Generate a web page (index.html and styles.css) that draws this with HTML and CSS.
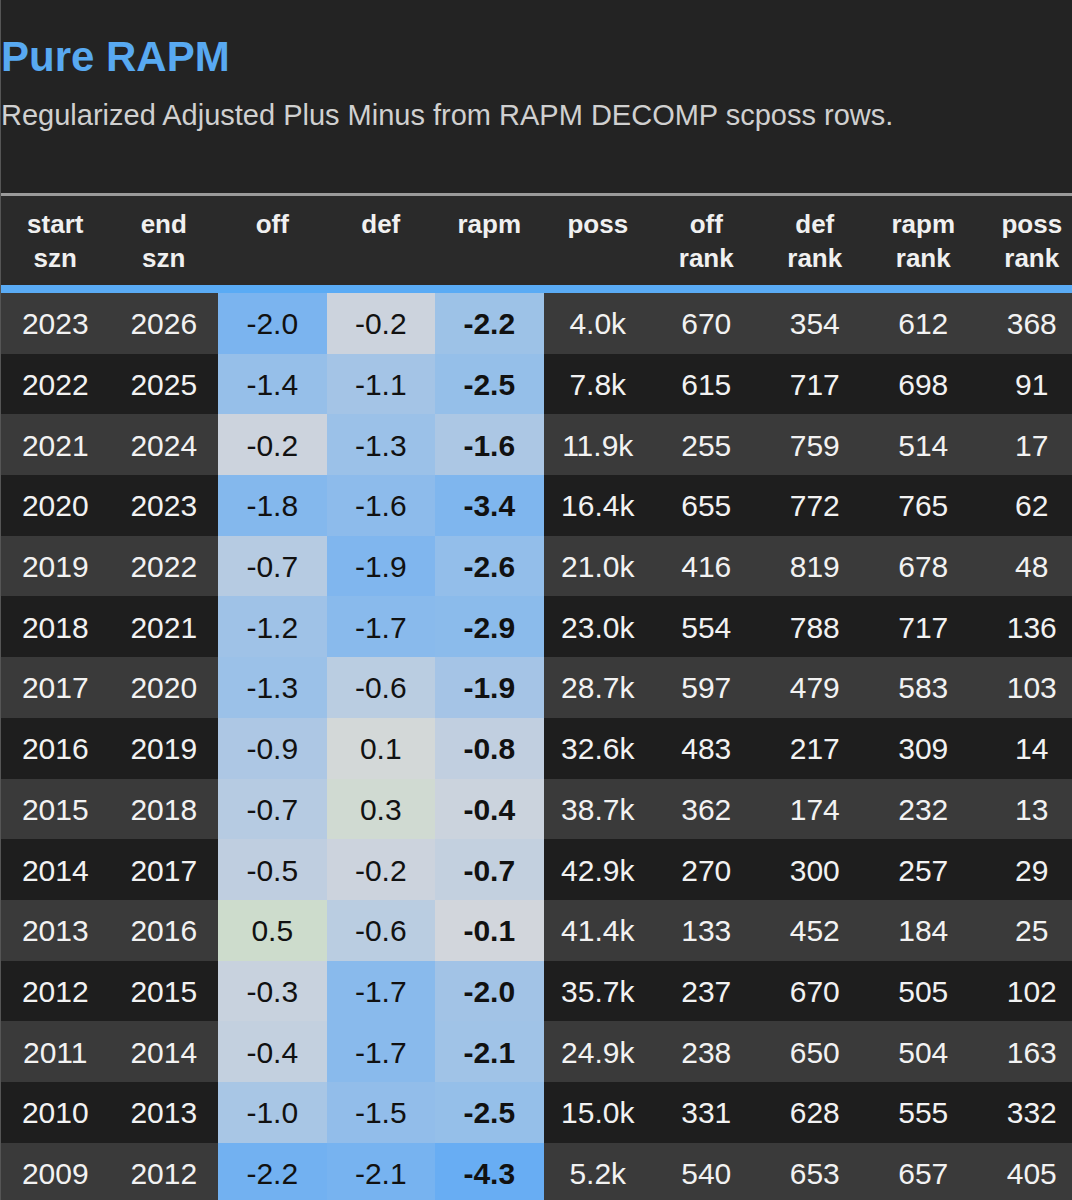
FILE: index.html
```html
<!DOCTYPE html>
<html lang="en">
<head>
<meta charset="utf-8">
<title>Pure RAPM</title>
<link rel="stylesheet" href="styles.css">
</head>
<body>
<div class="page">
  <h1 class="title">Pure RAPM</h1>
  <p class="subtitle">Regularized Adjusted Plus Minus from RAPM DECOMP scposs rows.</p>
  <table class="rapm">
    <colgroup>
      <col><col><col><col><col><col><col><col><col><col>
    </colgroup>
    <thead>
      <tr>
        <th>start<br>szn</th>
        <th>end<br>szn</th>
        <th>off</th>
        <th>def</th>
        <th>rapm</th>
        <th>poss</th>
        <th>off<br>rank</th>
        <th>def<br>rank</th>
        <th>rapm<br>rank</th>
        <th>poss<br>rank</th>
      </tr>
    </thead>
    <tbody>
      <tr><td>2023</td><td>2026</td><td class="heat" style="background:#7bb4ef">-2.0</td><td class="heat" style="background:#ccd3dd">-0.2</td><td class="heat total" style="background:#9dc2e7">-2.2</td><td>4.0k</td><td>670</td><td>354</td><td>612</td><td>368</td></tr>
      <tr><td>2022</td><td>2025</td><td class="heat" style="background:#96bfe9">-1.4</td><td class="heat" style="background:#a4c4e6">-1.1</td><td class="heat total" style="background:#95bfe9">-2.5</td><td>7.8k</td><td>615</td><td>717</td><td>698</td><td>91</td></tr>
      <tr><td>2021</td><td>2024</td><td class="heat" style="background:#ccd3dd">-0.2</td><td class="heat" style="background:#9bc1e8">-1.3</td><td class="heat total" style="background:#acc7e4">-1.6</td><td>11.9k</td><td>255</td><td>759</td><td>514</td><td>17</td></tr>
      <tr><td>2020</td><td>2023</td><td class="heat" style="background:#84b8ed">-1.8</td><td class="heat" style="background:#8dbbeb">-1.6</td><td class="heat total" style="background:#7fb6ee">-3.4</td><td>16.4k</td><td>655</td><td>772</td><td>765</td><td>62</td></tr>
      <tr><td>2019</td><td>2022</td><td class="heat" style="background:#b6cbe2">-0.7</td><td class="heat" style="background:#80b6ee">-1.9</td><td class="heat total" style="background:#93beea">-2.6</td><td>21.0k</td><td>416</td><td>819</td><td>678</td><td>48</td></tr>
      <tr><td>2018</td><td>2021</td><td class="heat" style="background:#9fc2e7">-1.2</td><td class="heat" style="background:#89baec">-1.7</td><td class="heat total" style="background:#8bbbeb">-2.9</td><td>23.0k</td><td>554</td><td>788</td><td>717</td><td>136</td></tr>
      <tr><td>2017</td><td>2020</td><td class="heat" style="background:#9bc1e8">-1.3</td><td class="heat" style="background:#bacde1">-0.6</td><td class="heat total" style="background:#a5c4e6">-1.9</td><td>28.7k</td><td>597</td><td>479</td><td>583</td><td>103</td></tr>
      <tr><td>2016</td><td>2019</td><td class="heat" style="background:#adc7e4">-0.9</td><td class="heat" style="background:#d3d8d8">0.1</td><td class="heat total" style="background:#c1cfe0">-0.8</td><td>32.6k</td><td>483</td><td>217</td><td>309</td><td>14</td></tr>
      <tr><td>2015</td><td>2018</td><td class="heat" style="background:#b6cbe2">-0.7</td><td class="heat" style="background:#d0dad2">0.3</td><td class="heat total" style="background:#cbd3dd">-0.4</td><td>38.7k</td><td>362</td><td>174</td><td>232</td><td>13</td></tr>
      <tr><td>2014</td><td>2017</td><td class="heat" style="background:#bfcee0">-0.5</td><td class="heat" style="background:#ccd3dd">-0.2</td><td class="heat total" style="background:#c3d0df">-0.7</td><td>42.9k</td><td>270</td><td>300</td><td>257</td><td>29</td></tr>
      <tr><td>2013</td><td>2016</td><td class="heat" style="background:#cddccc">0.5</td><td class="heat" style="background:#bacde1">-0.6</td><td class="heat total" style="background:#d2d6dc">-0.1</td><td>41.4k</td><td>133</td><td>452</td><td>184</td><td>25</td></tr>
      <tr><td>2012</td><td>2015</td><td class="heat" style="background:#c8d2de">-0.3</td><td class="heat" style="background:#89baec">-1.7</td><td class="heat total" style="background:#a2c3e6">-2.0</td><td>35.7k</td><td>237</td><td>670</td><td>505</td><td>102</td></tr>
      <tr><td>2011</td><td>2014</td><td class="heat" style="background:#c3d0df">-0.4</td><td class="heat" style="background:#89baec">-1.7</td><td class="heat total" style="background:#a0c3e7">-2.1</td><td>24.9k</td><td>238</td><td>650</td><td>504</td><td>163</td></tr>
      <tr><td>2010</td><td>2013</td><td class="heat" style="background:#a8c6e5">-1.0</td><td class="heat" style="background:#92bdea">-1.5</td><td class="heat total" style="background:#95bfe9">-2.5</td><td>15.0k</td><td>331</td><td>628</td><td>555</td><td>332</td></tr>
      <tr><td>2009</td><td>2012</td><td class="heat" style="background:#72b1f1">-2.2</td><td class="heat" style="background:#77b3f0">-2.1</td><td class="heat total" style="background:#68adf3">-4.3</td><td>5.2k</td><td>540</td><td>653</td><td>657</td><td>405</td></tr>
    </tbody>
  </table>
</div>
</body>
</html>
```

FILE: styles.css
```css
html, body {
  margin: 0;
  padding: 0;
  background: #232323;
  overflow: hidden;
}

body {
  font-family: "Liberation Sans", Arial, Helvetica, sans-serif;
  color: #f0f0f0;
}

.page {
  width: 1071px;
  min-height: 1200px;
  border-left: 1px solid #555555;
  overflow: hidden;
}

.title {
  margin: 33px 0 0 0;
  font-size: 42px;
  line-height: 48px;
  font-weight: bold;
  color: #58a9f1;
}

.subtitle {
  margin: 17px 0 0 0;
  font-size: 29px;
  line-height: 34px;
  color: #d0d0d0;
}

.rapm {
  margin-top: 61px;
  width: 1085px;
  table-layout: fixed;
  border-collapse: separate;
  border-spacing: 0;
  border-top: 3px solid #9a9a9a;
}

.rapm col {
  width: 108.5px;
}

.rapm thead th {
  background: #2a2a2a;
  height: 97px;
  padding: 11px 0 0 0;
  box-sizing: border-box;
  vertical-align: top;
  font-size: 26px;
  line-height: 34px;
  font-weight: bold;
  color: #f0f0f0;
  text-align: center;
  border-bottom: 8px solid #5aabf5;
}

.rapm tbody td {
  height: 60.7px;
  padding: 2px 0 0 0;
  box-sizing: border-box;
  text-align: center;
  vertical-align: middle;
  font-size: 30px;
  color: #f2f2f2;
}

.rapm tbody tr:nth-child(odd) td {
  background: #3a3a3a;
}

.rapm tbody tr:nth-child(even) td {
  background: #1e1e1e;
}

.rapm tbody td.heat {
  color: #111111;
}

.rapm tbody td.total {
  font-weight: bold;
}
```
